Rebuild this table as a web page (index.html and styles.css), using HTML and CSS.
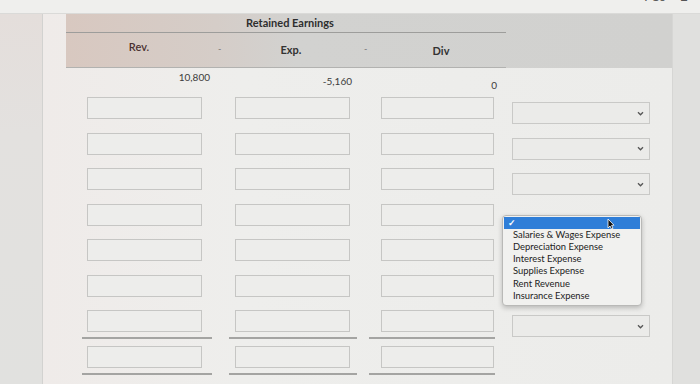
FILE: index.html
```html
<!DOCTYPE html>
<html>
<head>
<meta charset="utf-8">
<link rel="stylesheet" href="styles.css">
</head>
<body>
<div class="top"><span class="topicons">? 10</span><span class="menu">&#8801;</span></div>
<div class="main">
  <div class="gutter"></div>
  <div class="panel">
    <div class="band">
      <div class="title">Retained Earnings</div>
      <div class="heads">
        <div class="h">Rev.</div>
        <div class="h"><span class="dash">-</span>Exp.</div>
        <div class="h"><span class="dash">-</span>Div</div>
      </div>
    </div>
    <div class="values">
      <div class="v">10,800</div>
      <div class="v">-5,160</div>
      <div class="v">0</div>
    </div>
    <div class="rows">
      <div class="row">
        <div class="cell c1"><div class="box"></div></div>
        <div class="cell c2"><div class="box"></div></div>
        <div class="cell c3"><div class="box"></div></div>
        <div class="cell c4"><div class="select"><svg class="chev" viewBox="0 0 8 6"><path d="M1 1.5 L4 4.5 L7 1.5" /></svg></div></div>
      </div>
      <div class="row">
        <div class="cell c1"><div class="box"></div></div>
        <div class="cell c2"><div class="box"></div></div>
        <div class="cell c3"><div class="box"></div></div>
        <div class="cell c4"><div class="select"><svg class="chev" viewBox="0 0 8 6"><path d="M1 1.5 L4 4.5 L7 1.5" /></svg></div></div>
      </div>
      <div class="row">
        <div class="cell c1"><div class="box"></div></div>
        <div class="cell c2"><div class="box"></div></div>
        <div class="cell c3"><div class="box"></div></div>
        <div class="cell c4"><div class="select"><svg class="chev" viewBox="0 0 8 6"><path d="M1 1.5 L4 4.5 L7 1.5" /></svg></div></div>
      </div>
      <div class="row">
        <div class="cell c1"><div class="box"></div></div>
        <div class="cell c2"><div class="box"></div></div>
        <div class="cell c3"><div class="box"></div></div>
        <div class="cell c4">
          <div class="dropdown">
            <div class="opt sel"><span class="check">&#10003;</span></div>
            <div class="opt">Salaries &amp; Wages Expense</div>
            <div class="opt">Depreciation Expense</div>
            <div class="opt">Interest Expense</div>
            <div class="opt">Supplies Expense</div>
            <div class="opt">Rent Revenue</div>
            <div class="opt">Insurance Expense</div>
            <svg class="cursor" viewBox="0 0 8 12"><path d="M1 1 L1 10 L3 8 L4.5 11 L6 10.3 L4.6 7.4 L7 7.2 Z" /></svg>
          </div>
        </div>
      </div>
      <div class="row">
        <div class="cell c1"><div class="box"></div></div>
        <div class="cell c2"><div class="box"></div></div>
        <div class="cell c3"><div class="box"></div></div>
        <div class="cell c4"></div>
      </div>
      <div class="row">
        <div class="cell c1"><div class="box"></div></div>
        <div class="cell c2"><div class="box"></div></div>
        <div class="cell c3"><div class="box"></div></div>
        <div class="cell c4"></div>
      </div>
      <div class="row">
        <div class="cell c1"><div class="box"></div><div class="rule"></div></div>
        <div class="cell c2"><div class="box"></div><div class="rule"></div></div>
        <div class="cell c3"><div class="box"></div><div class="rule"></div></div>
        <div class="cell c4"><div class="select"><svg class="chev" viewBox="0 0 8 6"><path d="M1 1.5 L4 4.5 L7 1.5" /></svg></div></div>
      </div>
      <div class="row">
        <div class="cell c1"><div class="box"></div><div class="rule"></div></div>
        <div class="cell c2"><div class="box"></div><div class="rule"></div></div>
        <div class="cell c3"><div class="box"></div><div class="rule"></div></div>
        <div class="cell c4"></div>
      </div>
    </div>
  </div>
  <div class="rgutter"></div>
</div>
</body>
</html>
```
FILE: styles.css
```css
* { box-sizing: border-box; }
html, body { margin: 0; padding: 0; }
body {
  width: 700px;
  height: 384px;
  overflow: hidden;
  background: #ebebe9;
  font-family: Lato, "Open Sans", sans-serif;
  color: #333;
}
.top {
  height: 14px;
  background: #efefed;
  border-bottom: 1px solid #dadad8;
  display: flex;
  justify-content: flex-end;
  align-items: flex-start;
  gap: 14px;
  padding-right: 12px;
  overflow: hidden;
}
.topicons {
  font-size: 12px;
  line-height: 12px;
  color: #555;
  margin-top: -9px;
}
.menu {
  font-size: 14px;
  line-height: 14px;
  color: #555;
  margin-top: -9px;
}
.main {
  display: flex;
  height: 370px;
}
.gutter {
  width: 43px;
  background: linear-gradient(180deg, #e4dedb 0, #e3e1df 120px, #e1e1df 100%);
  border-right: 1px solid #d2d2d0;
}
.panel {
  width: 629px;
  padding-left: 23px;
  background: linear-gradient(90deg, #efebe9 0, #eeeeec 200px, #ececea 100%);
}
.rgutter {
  flex: 1;
  background: #e0e0de;
  border-left: 1px solid #d6d6d4;
}
.band {
  height: 54px;
  background: linear-gradient(90deg, #d8c8c0 0, #d5cdc8 150px, #d2d2d0 230px, #d1d1cf 100%);
  display: grid;
  grid-template-columns: 150px 146px 144px 166px;
  grid-template-rows: 19px 35px;
}
.title {
  grid-column: 1 / 4;
  text-align: center;
  font-weight: 700;
  font-size: 11px;
  line-height: 18px;
  color: #2e2e2e;
  padding-left: 8px;
  border-bottom: 1px solid #9d9d9b;
}
.heads {
  grid-column: 1 / 4;
  display: grid;
  grid-template-columns: 150px 146px 144px;
  border-bottom: 1px solid #b2b2b0;
}
.h {
  position: relative;
  text-align: center;
  font-weight: 700;
  font-size: 11px;
  line-height: 30px;
  color: #333;
}
.h:first-child { color: #4a3030; font-weight: 600; line-height: 28px; padding-right: 4px; }
.h:nth-child(2) { padding-left: 4px; line-height: 34px; }
.h:nth-child(3) { padding-left: 14px; line-height: 36px; }
.dash {
  position: absolute;
  left: 2px;
  top: 0;
  font-weight: 400;
  font-size: 9px;
  color: #777;
  line-height: 32px;
}
.values {
  display: grid;
  grid-template-columns: 150px 146px 144px;
  height: 29px;
}
.v {
  text-align: right;
  font-size: 10px;
  color: #3c3c3c;
}
.v:nth-child(1) { padding-right: 6px; line-height: 18px; }
.v:nth-child(2) { padding-right: 10px; line-height: 26px; }
.v:nth-child(3) { padding-right: 9px; line-height: 34px; }
.rows { display: flex; flex-direction: column; }
.row {
  height: 35.5px;
  display: grid;
  grid-template-columns: 150px 146px 144px 166px;
  align-items: start;
}
.cell { position: relative; display: flex; flex-direction: column; }
.box {
  height: 22px;
  border: 1px solid #c6c6c4;
  background: #ededeb;
}
.c1 .box { margin-left: 21px; width: 115px; }
.c2 .box { margin-left: 19px; width: 115px; }
.c3 .box { margin-left: 19px; width: 113px; }
.rule {
  height: 2px;
  background: #a4a4a2;
  margin-top: 5px;
}
.c1 .rule { margin-left: 16px; width: 130px; }
.c2 .rule { margin-left: 13px; width: 128px; }
.c3 .rule { margin-left: 7px; width: 126px; }
.select {
  margin-top: 5px;
  margin-left: 6px;
  width: 138px;
  height: 22px;
  border: 1px solid #c9c9c7;
  background: #ebebe9;
  display: flex;
  justify-content: flex-end;
  align-items: center;
  padding-right: 5px;
}
.chev { width: 7px; height: 5px; }
.chev path { fill: none; stroke: #555; stroke-width: 1.6; }
.dropdown {
  position: absolute;
  left: -4px;
  top: 11px;
  width: 140px;
  height: 91px;
  background: #f1f1ef;
  border: 1px solid #b9b9b7;
  border-radius: 4px;
  box-shadow: 0 2px 5px rgba(0, 0, 0, 0.22);
  padding-top: 1px;
  z-index: 2;
}
.opt {
  font-size: 9.4px;
  line-height: 12.3px;
  height: 12.3px;
  color: #222;
  padding-left: 10px;
  white-space: nowrap;
}
.opt.sel {
  background: #2f7ed8;
  margin: 0 1px;
  padding-left: 4px;
  height: 12px;
}
.check { color: #fff; font-size: 9px; font-weight: 700; line-height: 12px; }
.cursor {
  position: absolute;
  left: 104px;
  top: 2px;
  width: 8px;
  height: 12px;
}
.cursor path { fill: #111; stroke: #fff; stroke-width: 0.8; }
```
